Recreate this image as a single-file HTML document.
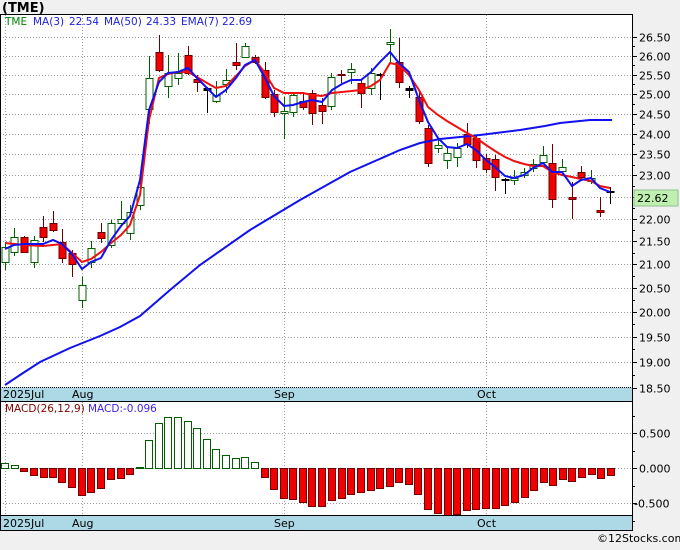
<!DOCTYPE html>
<html><head><meta charset="utf-8"><style>
body{margin:0;background:#f0f0f0;width:680px;height:546px;overflow:hidden;font-family:"DejaVu Sans","Liberation Sans",sans-serif}
svg text{font-family:"DejaVu Sans","Liberation Sans",sans-serif}
</style></head><body>
<svg id="s" width="680" height="546" xmlns="http://www.w3.org/2000/svg">
<rect width="680" height="546" fill="#f0f0f0"/>
<text x="2" y="12" font-size="13" font-weight="bold" fill="#000">(TME)</text>
<rect x="0" y="14" width="632" height="373" fill="#fff"/>
<rect x="0" y="401" width="632" height="114" fill="#fff"/>
<rect x="0" y="387" width="632" height="14" fill="#add8e6"/>
<rect x="0" y="515" width="632" height="15" fill="#add8e6"/>
<g id="grid" stroke="#999" stroke-dasharray="1,2" stroke-width="1"></g>
<g id="c"></g>
<g id="m"></g>
<polyline id="ma50" fill="none" stroke="#1010f0" stroke-width="2"/>
<polyline id="ema" fill="none" stroke="#f01010" stroke-width="2"/>
<polyline id="ma3" fill="none" stroke="#1010f0" stroke-width="2"/>
<g stroke="#000" stroke-width="1">
<line x1="0" y1="14.5" x2="633" y2="14.5"/>
<line x1="0.5" y1="14" x2="0.5" y2="531"/>
<line x1="632.5" y1="14" x2="632.5" y2="531"/>
<line x1="0" y1="387.5" x2="632" y2="387.5" stroke-dasharray="1,1"/>
<line x1="0" y1="401.5" x2="632" y2="401.5"/>
<line x1="0" y1="515.5" x2="632" y2="515.5"/>
<line x1="0" y1="530.5" x2="633" y2="530.5"/>
</g>
<g font-size="11" fill="#000">
<text x="3" y="398">2025Jul</text><text x="72" y="398">Aug</text><text x="274" y="398">Sep</text><text x="477" y="398">Oct</text>
<text x="3" y="527">2025Jul</text><text x="72" y="527">Aug</text><text x="274" y="527">Sep</text><text x="477" y="527">Oct</text>
</g>
<text y="25" font-size="10.5" fill="#2020e0"><tspan x="5" fill="#008000">TME</tspan><tspan x="33">MA(3)</tspan><tspan x="69">22.54</tspan><tspan x="104">MA(50)</tspan><tspan x="146">24.33</tspan><tspan x="181">EMA(7)</tspan><tspan x="222">22.69</tspan></text>
<text x="5" y="412" font-size="10.5" fill="#800000">MACD(26,12,9)<tspan x="88" fill="#4020f0">MACD:-0.096</tspan></text>
<g id="ax" font-size="11" fill="#000"></g>
<rect x="634" y="190" width="44" height="16" fill="#c0f0b0" stroke="#90c090"/>
<text x="637" y="202" font-size="11" fill="#000">22.62</text>
<text x="597" y="542" font-size="11" fill="#000">©12Stocks.com</text>
</svg>
<script>
var NS="http://www.w3.org/2000/svg";
function el(p,t,a){var e=document.createElementNS(NS,t);for(var k in a)e.setAttribute(k,a[k]);p.appendChild(e);return e;}
var g=document.getElementById('grid'),ax=document.getElementById('ax'),c=document.getElementById('c'),m=document.getElementById('m');
function py(p){return 37+(Math.log(26.5)-Math.log(p))*977;}
for(var i=0;i<=16;i++){var pv=26.5-i*0.5;var y=Math.round(py(pv))+.5;var v=pv.toFixed(2);
 if(i<16)el(g,'line',{x1:0,y1:y,x2:632,y2:y});
 el(ax,'line',{x1:632,y1:y,x2:637,y2:y,stroke:'#000'});
 var t=el(ax,'text',{x:639,y:y+4});t.textContent=v;
 if(i<16){var ym=Math.round(py(pv-0.25))+.5;el(ax,'line',{x1:632,y1:ym,x2:635,y2:ym,stroke:'#000'});}}
[[433.5,'0.500'],[468.5,'0.000'],[503.5,'-0.500']].forEach(function(a){el(g,'line',{x1:0,y1:a[0],x2:632,y2:a[0]});
 el(ax,'line',{x1:632,y1:a[0],x2:637,y2:a[0],stroke:'#000'});var t=el(ax,'text',{x:a[1][0]=='-'?634:639,y:a[0]+4});t.textContent=a[1];});
[416,451,486,521].forEach(function(y){el(ax,'line',{x1:632,y1:y+.5,x2:635,y2:y+.5,stroke:'#000'});});
[5.5,82.5,284.5,486.5].forEach(function(x){el(g,'line',{x1:x,y1:15,x2:x,y2:387});el(g,'line',{x1:x,y1:402,x2:x,y2:515});});
var C=[[5,247,262,242,270,'g'],[14,237,252,228,256,'g'],[24,237,252,236,253,'r'],[34,240,262,236,268,'g'],[43,227,237,216,242,'r'],[53,223,230,211,232,'r'],[62,242,258,229,263,'r'],[72,253,264,250,277,'r'],[82,285,300,277,308,'g'],[91,248,262,241,268,'g'],[101,232,238,223,243,'r'],[111,223,245,220,248,'g'],[121,219,223,201,225,'g'],[130,212,233,205,240,'g'],[140,187,205,175,210,'g'],[149,78,109,56,124,'g'],[159,52,70,35,72,'r'],[168,73,86,55,98,'g'],[178,73,78,53,85,'g'],[188,55,73,46,75,'r'],[197,79,82,75,92,'r'],[207,88,90,87,113,'k'],[216,95,101,81,103,'g'],[226,80,84,69,93,'g'],[236,62,65,43,70,'r'],[245,46,57,43,58,'g'],[255,57,62,55,64,'r'],[265,70,97,62,99,'r'],[274,94,112,90,117,'r'],[284,111,113,97,139,'g'],[293,95,112,93,117,'g'],[303,101,107,92,110,'r'],[312,93,113,90,125,'r'],[322,105,111,98,124,'r'],[331,77,106,73,110,'g'],[341,74,75,70,83,'r'],[351,69,72,63,84,'g'],[361,83,93,80,108,'r'],[371,73,88,68,95,'g'],[380,74,75,73,100,'k'],[390,42,44,29,63,'g'],[399,62,82,38,88,'r'],[409,88,90,86,98,'k'],[419,97,121,92,124,'r'],[428,128,163,125,167,'r'],[438,145,148,140,153,'g'],[447,153,160,147,169,'g'],[457,148,157,143,167,'g'],[467,134,144,123,148,'r'],[476,138,160,135,168,'r'],[486,158,169,154,173,'r'],[495,159,177,155,191,'r'],[505,179,180,178,194,'k'],[514,178,180,170,185,'g'],[524,172,175,168,178,'g'],[533,164,168,159,172,'g'],[543,155,162,146,164,'g'],[552,163,199,144,208,'r'],[562,167,171,159,176,'g'],[572,197,199,182,219,'r'],[581,172,177,166,180,'r'],[591,178,181,170,184,'g'],[600,210,212,197,217,'r'],[610,191,192,187,204,'k']];
C.forEach(function(d){var col=d[5]=='g'?'#006000':(d[5]=='r'?'#700000':'#000');
 el(c,'line',{x1:d[0]+.5,y1:d[3],x2:d[0]+.5,y2:d[4],stroke:col});
 var h=Math.max(d[2]-d[1],1);
 el(c,'rect',{x:d[0]-3,y:d[1]+.5,width:7,height:h,fill:d[5]=='g'?'#fff':(d[5]=='r'?'#f00000':'#000'),stroke:col});});
function pl(id,a){document.getElementById(id).setAttribute('points',a.map(function(p){return p.join(',')}).join(' '));}
pl('ma50',[[5,385],[20,375],[40,362],[70,348],[100,336],[120,327],[140,316],[170,290],[200,265],[250,230],[300,200],[350,172],[400,150],[420,143],[440,139],[480,135],[520,130],[545,126],[560,123],[590,120],[612,120]]);
pl('ema',[[5,243],[24,245],[43,246],[62,244],[72,253],[82,262],[91,259],[101,252],[111,243],[121,235],[130,225],[140,195],[149,120],[159,78],[168,74],[178,72],[188,72],[197,77],[207,83],[216,88],[226,86],[236,76],[245,66],[255,60],[265,73],[274,88],[284,93],[293,93],[303,93],[312,95],[322,96],[332,93],[342,92],[361,90],[371,86],[380,80],[390,63],[399,65],[409,75],[419,90],[428,107],[438,115],[447,121],[457,127],[467,133],[476,138],[486,145],[495,151],[505,157],[514,161],[524,164],[533,166],[543,166],[552,172],[562,175],[572,177],[581,179],[591,181],[600,186],[610,188]]);
pl('ma3',[[5,249],[14,245],[24,244],[34,244],[43,244],[53,240],[62,244],[72,254],[82,269],[91,262],[101,258],[111,240],[121,226],[130,216],[140,180],[149,110],[159,82],[168,73],[178,72],[188,68],[197,78],[207,88],[216,97],[226,90],[236,78],[245,65],[255,60],[265,78],[274,96],[284,106],[293,105],[303,102],[312,100],[322,102],[332,90],[342,84],[351,80],[361,80],[371,72],[380,62],[390,52],[399,63],[409,72],[419,100],[428,122],[438,138],[447,147],[457,148],[467,144],[476,150],[486,160],[495,167],[505,176],[514,178],[524,175],[533,168],[543,163],[552,172],[562,172],[572,186],[581,180],[591,178],[600,188],[610,192]]);
var M=[[5,463],[15,465],[24,471],[34,475],[44,477],[53,477],[62,482],[72,487],[82,495],[91,492],[101,488],[111,479],[121,478],[130,474],[140,467],[149,440],[159,423],[168,417],[178,417],[188,421],[197,428],[207,439],[216,449],[226,455],[236,458],[245,457],[255,462],[265,477],[274,489],[284,498],[293,499],[303,502],[312,506],[322,506],[332,500],[342,498],[351,494],[361,492],[371,490],[380,488],[390,486],[399,482],[409,484],[418,494],[428,509],[438,513],[448,515],[457,514],[467,510],[476,509],[486,508],[496,508],[505,505],[515,502],[525,497],[534,490],[544,482],[553,485],[563,479],[572,481],[582,477],[592,474],[601,478],[611,475]];
M.forEach(function(d){var up=d[1]<468;var y0=up?d[1]:468,h=Math.max(Math.abs(d[1]-468),1);
 el(m,'rect',{x:d[0]-3.5,y:y0+.5,width:7,height:h,fill:up?'#fff':'#f00000',stroke:up?'#006000':'#700000'});});
</script>
</body></html>
